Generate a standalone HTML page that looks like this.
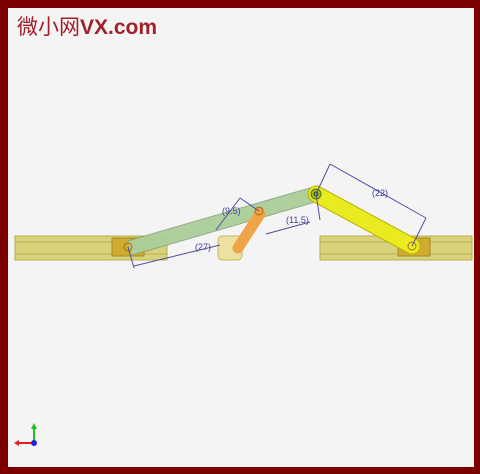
<!DOCTYPE html><html><head><style>
html,body{margin:0;padding:0;width:480px;height:474px;overflow:hidden;background:#7d0000}
#c{position:absolute;left:8px;top:8px;width:466px;height:459px;background:#f4f4f4}
.t{position:absolute;left:17px;top:11px;font:bold 21px "Liberation Sans","Noto Sans CJK SC",sans-serif;color:#a0202a}
</style></head><body>
<div id="c"></div>
<div class="t"><span style="font-weight:normal">微小网</span>VX.com</div>
<svg width="480" height="474" style="position:absolute;left:0;top:0">
<g stroke="#b8b050" stroke-width="1">
<rect x="15" y="236" width="152" height="24" fill="#d8d27c"/>
<line x1="15" y1="242" x2="167" y2="242"/><line x1="15" y1="254" x2="167" y2="254"/>
<rect x="320" y="236" width="152" height="24" fill="#d8d27c"/>
<line x1="320" y1="242" x2="472" y2="242"/><line x1="320" y1="254" x2="472" y2="254"/>
</g>
<rect x="112" y="238" width="32" height="18" fill="#cfac30" stroke="#a88a20"/>
<rect x="398" y="238" width="32" height="18" fill="#cfac30" stroke="#a88a20"/>
<rect x="218" y="236" width="24" height="24" rx="4" fill="#eee0a0" stroke="#c8b860"/>
<line x1="130" y1="248" x2="316" y2="194" stroke="#7a9a70" stroke-width="16" stroke-linecap="butt" opacity="0.8"/>
<line x1="130" y1="248" x2="316" y2="194" stroke="#b5d6a0" stroke-width="14" opacity="0.85"/>
<line x1="238" y1="248" x2="260" y2="214" stroke="#f0a448" stroke-width="11" stroke-linecap="round"/>
<line x1="316" y1="194" x2="412" y2="246" stroke="#b8b000" stroke-width="17" stroke-linecap="round"/>
<line x1="316" y1="194" x2="412" y2="246" stroke="#eaea20" stroke-width="15" stroke-linecap="round"/>
<circle cx="316" cy="194" r="5" fill="#a0c020" stroke="#507010"/>
<circle cx="316" cy="194" r="2" fill="none" stroke="#304010"/>
<circle cx="259" cy="211" r="4" fill="#f0a040" stroke="#a07020"/>
<circle cx="128" cy="247" r="4" fill="none" stroke="#a07020"/>
<circle cx="412" cy="246" r="4" fill="none" stroke="#a07020"/>
<g stroke="#5050a0" stroke-width="1" fill="none">
<line x1="128" y1="247" x2="134" y2="268"/><line x1="134" y1="266" x2="220" y2="245"/>
<line x1="330" y1="164" x2="316" y2="194"/><line x1="330" y1="164" x2="426" y2="218"/><line x1="426" y1="218" x2="412" y2="246"/>
<line x1="266" y1="234" x2="310" y2="222"/><line x1="316" y1="194" x2="320" y2="220"/>
<line x1="240" y1="198" x2="259" y2="211"/><line x1="240" y1="198" x2="216" y2="230"/>
</g>
<g font-family="Liberation Sans,sans-serif" font-size="9" fill="#4040a0">
<text x="195" y="250">(27)</text><text x="286" y="223">(11.5)</text>
<text x="372" y="196">(22)</text><text x="222" y="214">(9.5)</text>
</g>
<g stroke-width="2">
<line x1="34" y1="443" x2="34" y2="428" stroke="#20c020"/>
<line x1="34" y1="443" x2="18" y2="443" stroke="#e02020"/>
</g>
<circle cx="34" cy="443" r="3" fill="#2020e0"/>
<polygon points="31,429 37,429 34,423" fill="#20c020"/>
<polygon points="19,440 19,446 14,443" fill="#e02020"/>
</svg>
</body></html>
